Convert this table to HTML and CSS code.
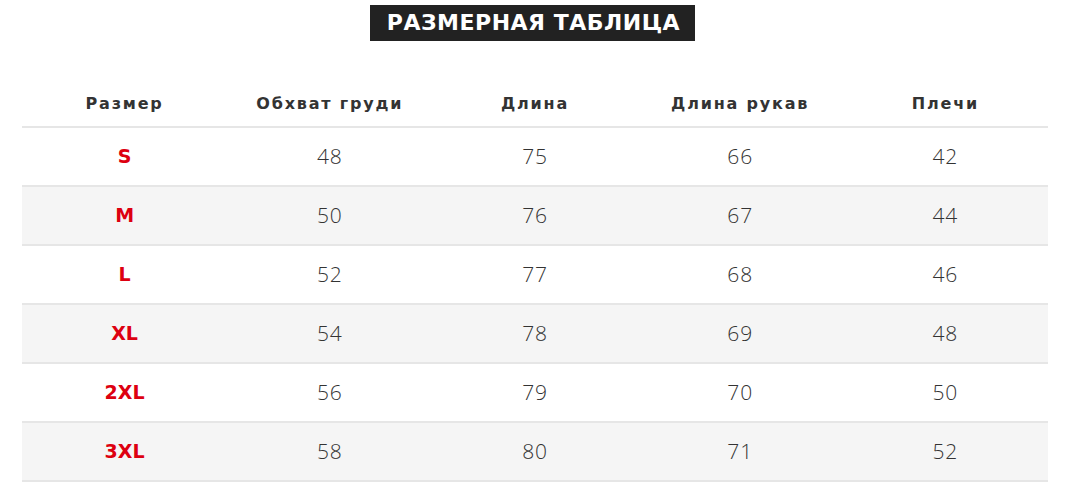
FILE: index.html
```html
<!DOCTYPE html>
<html lang="ru">
<head>
<meta charset="utf-8">
<link rel="stylesheet" href="styles.css">
</head>
<body>
<div class="page">
  <div class="title-wrap"><h1 class="title">РАЗМЕРНАЯ ТАБЛИЦА</h1></div>
  <table class="sizes">
    <thead>
      <tr><th>Размер</th><th>Обхват груди</th><th>Длина</th><th>Длина рукав</th><th>Плечи</th></tr>
    </thead>
    <tbody>
      <tr><td class="size">S</td><td>48</td><td>75</td><td>66</td><td>42</td></tr>
      <tr class="alt"><td class="size">M</td><td>50</td><td>76</td><td>67</td><td>44</td></tr>
      <tr><td class="size">L</td><td>52</td><td>77</td><td>68</td><td>46</td></tr>
      <tr class="alt"><td class="size">XL</td><td>54</td><td>78</td><td>69</td><td>48</td></tr>
      <tr><td class="size">2XL</td><td>56</td><td>79</td><td>70</td><td>50</td></tr>
      <tr class="alt"><td class="size">3XL</td><td>58</td><td>80</td><td>71</td><td>52</td></tr>
    </tbody>
  </table>
</div>
</body>
</html>
```

FILE: styles.css
```css
html, body {
  margin: 0;
  padding: 0;
  background: #ffffff;
}
body {
  font-family: "Open Sans", "DejaVu Sans", sans-serif;
  color: #333333;
}
.page {
  padding: 5px 17px 0 22px;
}
.title-wrap {
  display: flex;
  justify-content: center;
  padding-right: 5px;
}
.title {
  margin: 0;
  background: #222222;
  color: #ffffff;
  font-family: "DejaVu Sans", sans-serif;
  font-weight: 700;
  font-size: 22px;
  line-height: 36px;
  height: 36px;
  padding: 0 15px 0 17px;
  letter-spacing: 0.5px;
}
.sizes {
  width: 1026px;
  margin-top: 39px;
  border-collapse: collapse;
  table-layout: fixed;
}
.sizes th {
  height: 46px;
  padding: 0;
  font-family: "DejaVu Sans", sans-serif;
  font-weight: 700;
  font-size: 16px;
  letter-spacing: 1.8px;
  color: #333333;
  text-align: center;
  vertical-align: middle;
}
.sizes td {
  height: 56px;
  padding: 0 0 1px 0;
  text-align: center;
  vertical-align: middle;
  font-size: 21px;
  font-weight: 300;
  letter-spacing: 0.8px;
  color: #333333;
  border-top: 2px solid #e6e6e6;
  border-bottom: 2px solid #e6e6e6;
}
.sizes tr.alt td {
  background: #f5f5f5;
}
.sizes td.size {
  font-family: "DejaVu Sans", sans-serif;
  font-weight: 700;
  font-size: 19px;
  letter-spacing: 0;
  color: #dd0010;
}
```
